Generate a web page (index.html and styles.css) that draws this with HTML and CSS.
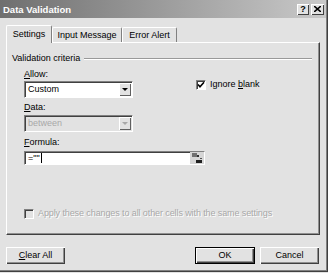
FILE: index.html
```html
<!DOCTYPE html>
<html lang="en">
<head>
    <meta charset="UTF-8">
    <title>Data Validation</title>
    <link rel="stylesheet" href="styles.css">
</head>
<body>
    <div class="window">
        <div class="titlebar">
            <span class="title">Data Validation</span>
            <div class="caption-buttons">
                <div class="cap-btn help">?</div>
                <div class="cap-btn close">
                    <svg width="7" height="6" viewBox="0 0 7 6"><path d="M0 0 L7 6 M7 0 L0 6" stroke="#000" stroke-width="1.6"/></svg>
                </div>
            </div>
        </div>
        <div class="tabs">
            <div class="tab active">Settings</div>
            <div class="tab wide">Input Message</div>
            <div class="tab last">Error Alert</div>
        </div>
        <div class="panel">
            <div class="group-title">
                <span>Validation criteria</span>
                <div class="etched"></div>
            </div>
            <div class="criteria">
                <div class="col">
                    <div class="label"><u>A</u>llow:</div>
                    <div class="select">
                        <span class="value">Custom</span>
                        <div class="arrow"><span class="tri"></span></div>
                    </div>
                    <div class="label label-data"><u>D</u>ata:</div>
                    <div class="select disabled">
                        <span class="value">between</span>
                        <div class="arrow"><span class="tri"></span></div>
                    </div>
                </div>
                <div class="check-row ignore">
                    <div class="checkbox checked">
                        <svg width="8" height="8" viewBox="0 0 8 8"><path d="M1 3.5 L3 5.8 L7 1.2" stroke="#000" stroke-width="1.6" fill="none"/></svg>
                    </div>
                    <span>Ignore <u>b</u>lank</span>
                </div>
            </div>
            <div class="label label-formula"><u>F</u>ormula:</div>
            <div class="formula">
                <span class="value">=""<span class="caret"></span></span>
                <div class="refedit">
                    <svg width="12" height="12" viewBox="0 0 12 12">
                        <rect x="1" y="1" width="5" height="4" fill="#707070"/>
                        <rect x="6" y="3" width="2" height="2" fill="#303030"/>
                        <rect x="5" y="8" width="6" height="3" fill="#202020"/>
                        <rect x="9" y="6" width="2" height="1" fill="#505050"/>
                    </svg>
                </div>
            </div>
            <div class="check-row apply">
                <div class="checkbox disabled-box"></div>
                <span class="disabled-text">Apply these changes to all other cells with the same settings</span>
            </div>
        </div>
        <div class="footer">
            <div class="button"><u>C</u>lear All</div>
            <div class="spacer"></div>
            <div class="button default">OK</div>
            <div class="button">Cancel</div>
        </div>
    </div>
</body>
</html>
```

FILE: styles.css
```css
body {
    margin: 0;
    background: #e2e2e2;
    font-family: "Liberation Sans", Arial, sans-serif;
    font-size: 9px;
    color: #000;
}
.window {
    width: 328px;
    height: 272px;
    box-sizing: border-box;
    background: #e2e2e2;
    box-shadow: inset -1px -1px #404040, inset -2px -2px #808080;
    overflow: hidden;
}
.titlebar {
    height: 18px;
    width: 326px;
    display: flex;
    align-items: center;
    justify-content: space-between;
    background: linear-gradient(to right, #6f6f6f, #c9c9c9);
    padding: 0 2px 0 3px;
    box-sizing: border-box;
}
.title {
    color: #fff;
    font-weight: bold;
    font-size: 9.5px;
}
.caption-buttons {
    display: flex;
    gap: 2px;
}
.cap-btn {
    width: 12px;
    height: 11px;
    box-sizing: border-box;
    background: #e2e2e2;
    box-shadow: inset 1px 1px #fff, inset -1px -1px #404040;
    display: flex;
    align-items: center;
    justify-content: center;
    font-weight: bold;
    font-size: 9px;
    line-height: 11px;
}
.cap-btn.close {
    width: 13px;
}
.tabs {
    margin-top: 7px;
    margin-left: 6px;
    height: 17px;
    display: flex;
    align-items: flex-end;
}
.tab {
    height: 15px;
    box-sizing: border-box;
    line-height: 14px;
    text-align: center;
    border-top: 1px solid #fff;
    border-left: 1px solid #fff;
    border-right: 1px solid #808080;
    border-radius: 2px 2px 0 0;
    width: 70px;
}
.tab.active {
    width: 46px;
    height: 18px;
    margin-bottom: -1px;
    line-height: 16px;
    background: #e2e2e2;
    position: relative;
    z-index: 1;
}
.tab.last {
    width: 55px;
}
.panel {
    width: 314px;
    height: 193px;
    margin-left: 6px;
    box-sizing: border-box;
    border-top: 1px solid #fff;
    border-left: 1px solid #fff;
    border-right: 1px solid #404040;
    border-bottom: 1px solid #404040;
    box-shadow: inset -1px -1px #909090;
    padding: 10px 0 0 5px;
}
.group-title {
    display: flex;
    align-items: center;
    line-height: 11px;
    margin-right: 7px;
}
.etched {
    flex: 1;
    margin-left: 4px;
    border-top: 1px solid #999;
    border-bottom: 1px solid #fff;
}
.criteria {
    display: flex;
    margin-left: 12px;
}
.col {
    width: 109px;
}
.label {
    line-height: 11px;
    margin-top: 5px;
}
.label-data {
    margin-top: 4px;
}
.select {
    margin-top: 1px;
    height: 17px;
    box-sizing: border-box;
    background: #fff;
    border-top: 1px solid #808080;
    border-left: 1px solid #808080;
    border-right: 1px solid #fff;
    border-bottom: 1px solid #fff;
    box-shadow: inset 1px 1px #404040;
    display: flex;
    align-items: center;
    justify-content: space-between;
    padding: 1px 1px 1px 3px;
}
.select .value {
    line-height: 13px;
}
.label-data + .select {
    margin-top: 2px;
}
.arrow {
    width: 12px;
    height: 13px;
    box-sizing: border-box;
    background: #e2e2e2;
    box-shadow: inset 1px 1px #fff, inset -1px -1px #606060;
    display: flex;
    align-items: center;
    justify-content: center;
}
.tri {
    width: 0;
    height: 0;
    border-left: 3px solid transparent;
    border-right: 3px solid transparent;
    border-top: 3px solid #000;
}
.select.disabled {
    background: #e2e2e2;
}
.select.disabled .value {
    color: #a8a8a8;
}
.select.disabled .tri {
    border-top-color: #a8a8a8;
}
.check-row {
    display: flex;
    align-items: center;
    line-height: 11px;
}
.check-row.ignore {
    margin-left: 63px;
    margin-top: 15px;
    align-self: flex-start;
}
.checkbox {
    width: 10px;
    height: 10px;
    box-sizing: border-box;
    background: #fff;
    border-top: 1px solid #808080;
    border-left: 1px solid #808080;
    border-right: 1px solid #fff;
    border-bottom: 1px solid #fff;
    box-shadow: inset 1px 1px #404040;
    margin-right: 4px;
    display: flex;
    align-items: center;
    justify-content: center;
}
.checkbox.disabled-box {
    background: #e2e2e2;
}
.label-formula {
    margin-left: 12px;
}
.formula {
    margin: 3px 0 0 12px;
    width: 181px;
    height: 14px;
    box-sizing: border-box;
    background: #fff;
    border-top: 1px solid #808080;
    border-left: 1px solid #808080;
    border-right: 1px solid #fff;
    border-bottom: 1px solid #fff;
    box-shadow: inset 1px 1px #404040;
    display: flex;
    align-items: center;
    justify-content: space-between;
    padding-left: 3px;
}
.formula .value {
    line-height: 11px;
    display: flex;
    align-items: center;
}
.caret {
    display: inline-block;
    width: 1px;
    height: 10px;
    background: #000;
    margin-left: 1px;
}
.refedit {
    width: 14px;
    height: 12px;
    background: #d6d6d6;
    display: flex;
    align-items: center;
    justify-content: center;
}
.check-row.apply {
    margin: 43px 0 0 12px;
}
.disabled-text {
    color: #a8a8a8;
    text-shadow: 1px 1px #fff;
    letter-spacing: -0.1px;
}
.footer {
    display: flex;
    margin: 12px 0 0 6px;
    width: 313px;
    gap: 5px;
}
.spacer {
    flex: 1;
}
.button {
    width: 59px;
    height: 17px;
    box-sizing: border-box;
    text-align: center;
    line-height: 16px;
    background: #e2e2e2;
    box-shadow: inset 1px 1px #fff, inset -1px -1px #404040, inset -2px -2px #909090;
}
.button.default {
    width: 60px;
    border: 1px solid #000;
    line-height: 14px;
}
```
